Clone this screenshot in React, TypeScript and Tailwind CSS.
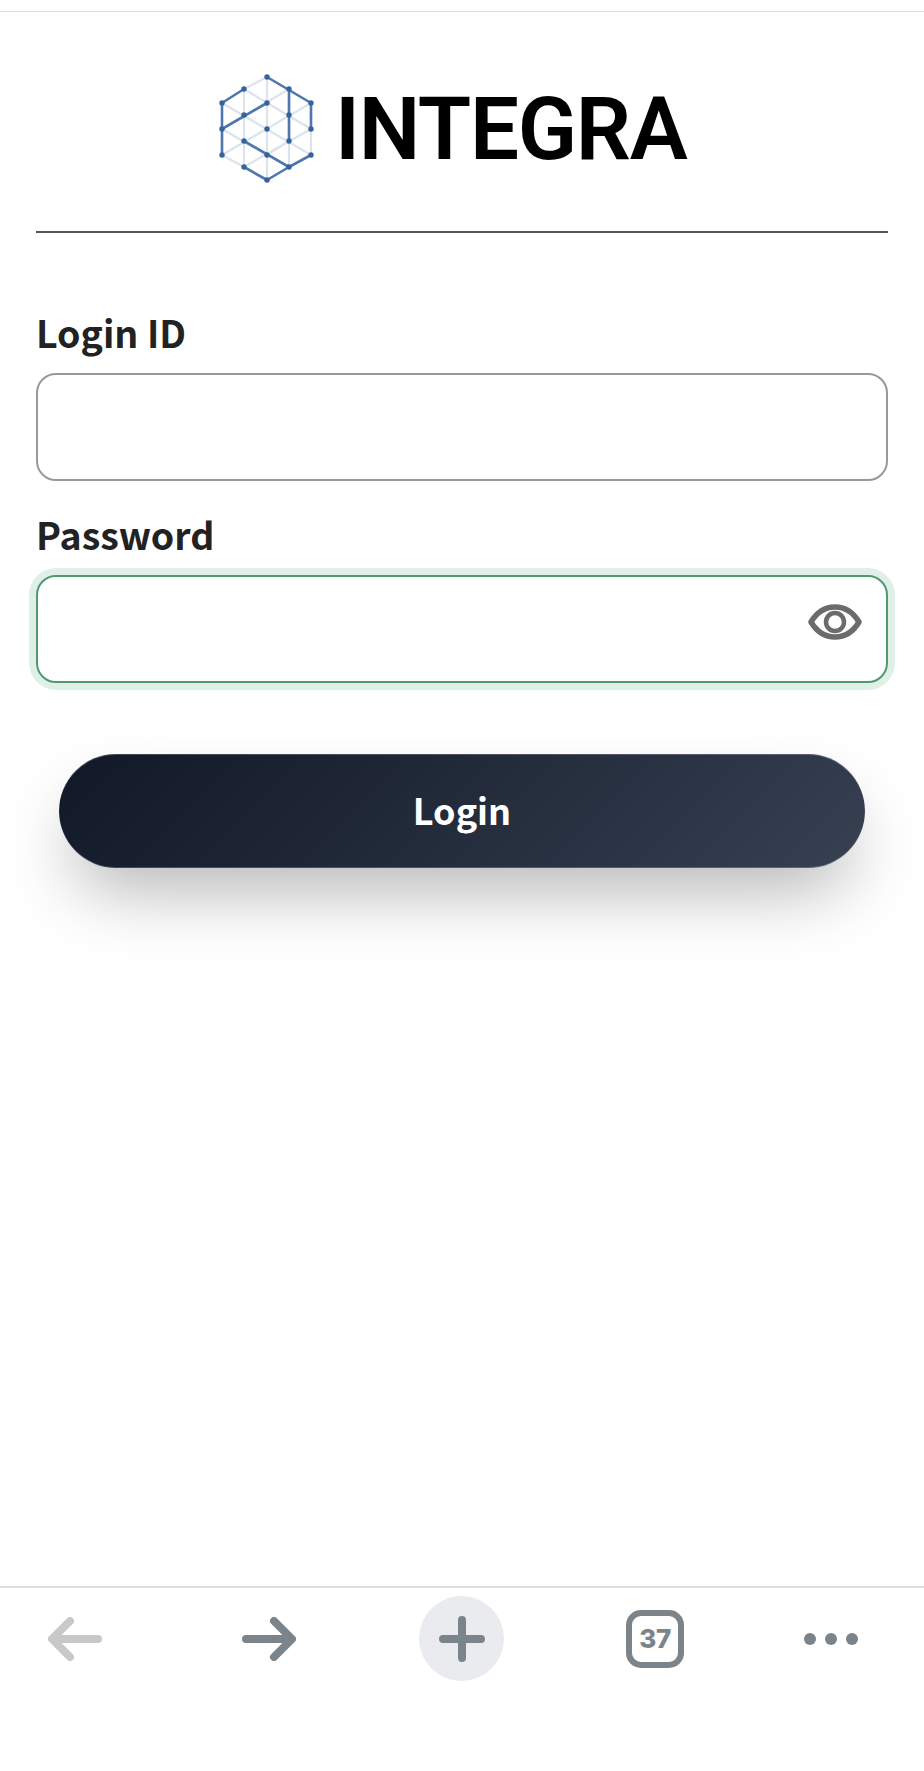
const nodes: [number, number][] = [
  [267, 75], [244, 87], [289, 87], [222, 101], [267, 101], [311, 101],
  [244, 113], [289, 113], [222, 127], [267, 127], [311, 127],
  [244, 139], [289, 139], [222, 153], [267, 153], [311, 153],
  [244, 165], [289, 165], [267, 178],
];

const faint = [
  "M267 75 244 87M267 75V178M244 87V165M289 87V165M222 127V153M311 101V153",
  "M244 87 311 127M222 101 311 153M222 127 267 153M267 101 311 127",
  "M289 87 222 127M311 101 222 153M311 127 244 165M267 153 289 139M222 153 244 165",
];
const strong = [
  "M267 75 311 101V127",
  "M289 87V139",
  "M222 153V101L244 87",
  "M222 127 267 101",
  "M244 139 289 165 311 153",
  "M244 165 267 178 289 165",
];

const LogoMark = () => (
  <svg viewBox="210 65 112 122" className="shrink-0 w-[112px] h-[122px]">
    {faint.map((d, i) => (
      <path key={i} d={d} fill="none" stroke="#dde3ea" strokeWidth="2.2" />
    ))}
    {strong.map((d, i) => (
      <path key={i} d={d} fill="none" stroke="#4f76ae" strokeWidth="2.6" strokeLinejoin="round" />
    ))}
    {nodes.map(([x, y], i) => (
      <circle key={i} cx={x} cy={y} r="2.7" fill="#35639f" />
    ))}
  </svg>
);

const Field = ({ label, focused }: { label: string; focused?: boolean }) => (
  <div>
    <label className="block h-[63px] text-[37.5px] leading-[43px] font-bold text-[#222222]">{label}</label>
    <div
      className={
        focused
          ? "relative h-[108px] rounded-[20px] border-2 border-[#4f9a70] bg-white shadow-[0_0_0_7px_#e0f0e8]"
          : "relative h-[108px] rounded-[20px] border-2 border-[#999999] bg-white"
      }
    >
      {focused && (
        <svg viewBox="0 0 54 36" className="absolute right-[24px] top-[27px] w-[54px] h-[36px]">
          <path d="M3 18C9 8 17 3 27 3s18 5 24 15c-6 10-14 15-24 15S9 28 3 18Z" fill="none" stroke="#6b6b6b" strokeWidth="5.5" strokeLinejoin="round" />
          <circle cx="27" cy="18" r="9" fill="none" stroke="#6b6b6b" strokeWidth="4.5" />
        </svg>
      )}
    </div>
  </div>
);

const App = () => {
  return (
    <div className="flex h-[1771px] flex-col bg-white font-['Noto_Sans_CJK_KR','Noto_Sans',sans-serif]">
      <div className="mt-[11px] h-[1px] bg-[#dddddd]" />

      {/* logo */}
      <div className="flex h-[219px] items-center gap-[13px] pt-[12px] pl-[210px]">
        <LogoMark />
        <span className="mt-[4px] font-['Roboto',sans-serif] text-[87px] leading-none font-semibold tracking-[-1.3px] text-black">INTEGRA</span>
      </div>
      <div className="mx-[36px] h-[2px] bg-[#555555]" />

      {/* form */}
      <div className="mt-[77px] flex flex-col gap-[31px] px-[36px]">
        <Field label="Login ID" />
        <Field label="Password" focused />
      </div>

      <div className="mt-[71px] px-[59px]">
        <button className="flex h-[114px] w-full items-center justify-center rounded-full bg-linear-135 from-[#111827] to-[#374151] pb-[4px] text-[36px] font-bold text-white shadow-[0_35px_70px_-14px_rgba(0,0,0,0.3),inset_0_1px_0_rgba(255,255,255,0.2),inset_0_-1px_0_rgba(255,255,255,0.2)]">
          Login
        </button>
      </div>

      {/* browser bar */}
      <div className="mt-auto flex h-[185px] items-start border-t-2 border-[#dddddd] pt-[8px]">
        <div className="flex items-center pl-[48px]">
          <svg viewBox="0 0 54 44" className="w-[54px] h-[44px]">
            <path d="M50 22H5M22 4 4 22l18 18" fill="none" stroke="#c8c8c8" strokeWidth="8" strokeLinecap="round" strokeLinejoin="round" />
          </svg>
          <svg viewBox="0 0 54 44" className="ml-[140px] w-[54px] h-[44px]">
            <path d="M4 22h45M32 4l18 18-18 18" fill="none" stroke="#7b848b" strokeWidth="8" strokeLinecap="round" strokeLinejoin="round" />
          </svg>
          <div className="ml-[123px] flex h-[85px] w-[85px] items-center justify-center rounded-full bg-[#e9ebee]">
            <svg viewBox="0 0 46 46" className="w-[46px] h-[46px]">
              <path d="M23 4v38M4 23h38" fill="none" stroke="#7b848b" strokeWidth="8" strokeLinecap="round" />
            </svg>
          </div>
          <div className="ml-[122px] flex h-[58px] w-[58px] items-center justify-center rounded-[15px] border-[6px] border-[#7b848b] font-['Inter',sans-serif] text-[26px] font-extrabold tracking-[-0.5px] text-[#7b848b]">
            37
          </div>
          <div className="ml-[120px] flex gap-[9px]">
            <span className="h-[12px] w-[12px] rounded-full bg-[#7b848b]" />
            <span className="h-[12px] w-[12px] rounded-full bg-[#7b848b]" />
            <span className="h-[12px] w-[12px] rounded-full bg-[#7b848b]" />
          </div>
        </div>
      </div>
    </div>
  );
};

export default App;
